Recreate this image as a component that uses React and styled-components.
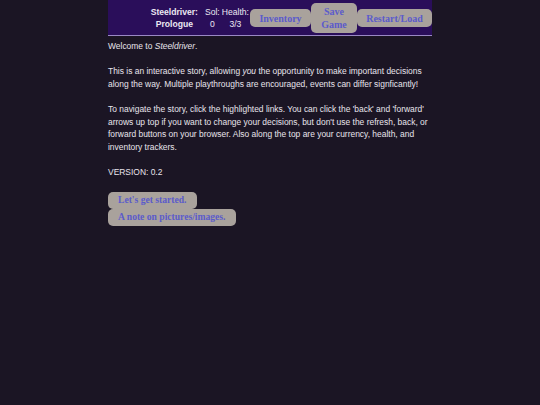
import React from "react";
import styled, { createGlobalStyle } from "styled-components";

const Global = createGlobalStyle`
  html, body {
    margin: 0;
    padding: 0;
    background: #1b1524;
    color: #e8e4ec;
    font-family: "Liberation Sans", Arial, sans-serif;
  }
`;

const Page = styled.div`
  width: 324px;
  margin: 0 auto;
`;

const Header = styled.header`
  box-sizing: border-box;
  display: flex;
  justify-content: flex-end;
  align-items: center;
  height: 35.5px;
  padding-top: 2px;
  background: #2a0e5a;
  border-bottom: 1.5px solid #9a88c4;
`;

const Stats = styled.table`
  border-collapse: collapse;
  font-size: 8.6px;
  color: #ece8f2;
  margin-right: 0;
  td {
    text-align: center;
    padding: 0 1px;
    line-height: 12.5px;
  }
`;

const Cell = styled.td`
  font-weight: ${(p) => (p.$bold ? 700 : 400)};
  padding-right: ${(p) => (p.$bold ? "6px" : "1px")} !important;
`;

const Buttons = styled.div`
  display: flex;
  align-items: center;
`;

const HeadButton = styled.button`
  border: none;
  background: #a9a29c;
  color: #5b5bcb;
  font-family: "Liberation Serif", "Times New Roman", serif;
  font-weight: 700;
  font-size: 10px;
  line-height: 13px;
  border-radius: 5px;
  padding: ${(p) => (p.$tall ? "2px 0" : "2.5px 0")};
  width: ${(p) => p.$w}px;
  cursor: pointer;
`;

const Content = styled.main`
  font-size: 8.45px;
  line-height: 12.7px;
  padding-top: 4px;
`;

const Para = styled.p`
  margin: 0 0 12.7px 0;
`;

const LinkList = styled.div`
  display: flex;
  flex-direction: column;
  align-items: flex-start;
  margin-top: 0;
`;

const StoryLink = styled.a`
  display: inline-block;
  background: #a9a29c;
  color: #5b5bcb;
  font-family: "Liberation Serif", "Times New Roman", serif;
  font-weight: 700;
  font-size: 9.6px;
  line-height: 12px;
  padding: 2.5px 11px 2.5px 10px;
  border-radius: 5px;
  text-decoration: none;
  cursor: pointer;
`;

export default function App() {
  return (
    <>
      <Global />
      <Page>
        <Header>
          <Stats>
            <tbody>
              <tr>
                <Cell $bold>Steeldriver:</Cell>
                <Cell>Sol:</Cell>
                <Cell>Health:</Cell>
              </tr>
              <tr>
                <Cell $bold>Prologue</Cell>
                <Cell>0</Cell>
                <Cell>3/3</Cell>
              </tr>
            </tbody>
          </Stats>
          <Buttons>
            <HeadButton $w={61}>Inventory</HeadButton>
            <HeadButton $w={46} $tall>
              Save
              <br />
              Game
            </HeadButton>
            <HeadButton $w={75}>Restart/Load</HeadButton>
          </Buttons>
        </Header>
        <Content>
          <Para>
            Welcome to <em>Steeldriver</em>.
          </Para>
          <Para>
            This is an interactive story, allowing <em>you</em> the opportunity to make important
            decisions along the way. Multiple playthroughs are encouraged, events can differ
            signficantly!
          </Para>
          <Para>
            To navigate the story, click the highlighted links. You can click the 'back' and
            'forward' arrows up top if you want to change your decisions, but don't use the
            refresh, back, or forward buttons on your browser. Also along the top are your
            currency, health, and inventory trackers.
          </Para>
          <Para>VERSION: 0.2</Para>
          <LinkList>
            <StoryLink>Let's get started.</StoryLink>
            <StoryLink>A note on pictures/images.</StoryLink>
          </LinkList>
        </Content>
      </Page>
    </>
  );
}
